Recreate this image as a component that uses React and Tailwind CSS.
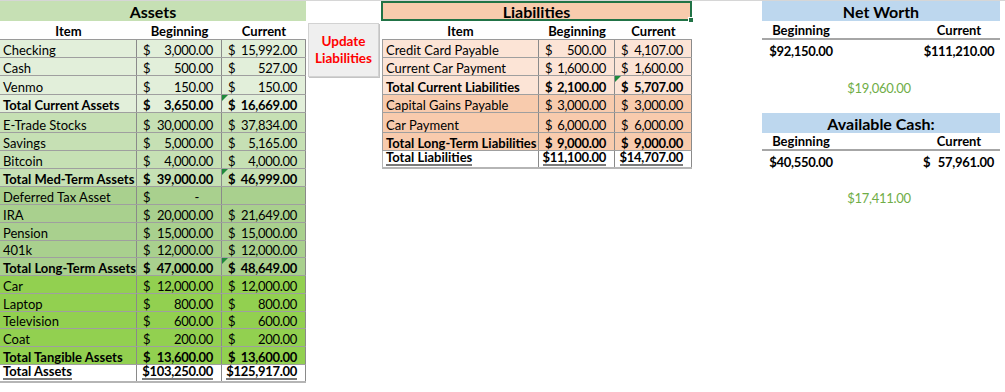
import React from 'react';

// row heights shared by every block so the sheet lines up
const H = ['h-[18px]', 'h-[18px]', 'h-[19px]', 'h-[18px]', 'h-[20px]', 'h-[18px]', 'h-[18px]', 'h-[18px]', 'h-[18px]', 'h-[18px]', 'h-[18px]', 'h-[17px]', 'h-[18px]', 'h-[18px]', 'h-[18px]', 'h-[17px]', 'h-[18px]', 'h-[18px]', 'h-[18px]'];

const assets = [
  { item: 'Checking', b: '3,000.00', c: '15,992.00', bg: 'bg-[#e2efda]' },
  { item: 'Cash', b: '500.00', c: '527.00', bg: 'bg-[#e2efda]' },
  { item: 'Venmo', b: '150.00', c: '150.00', bg: 'bg-[#e2efda]' },
  { item: 'Total Current Assets', b: '3,650.00', c: '16,669.00', bg: 'bg-[#e2efda]', bold: true, tri: true },
  { item: 'E-Trade Stocks', b: '30,000.00', c: '37,834.00', bg: 'bg-[#c6e0b4]' },
  { item: 'Savings', b: '5,000.00', c: '5,165.00', bg: 'bg-[#c6e0b4]' },
  { item: 'Bitcoin', b: '4,000.00', c: '4,000.00', bg: 'bg-[#c6e0b4]' },
  { item: 'Total Med-Term Assets', b: '39,000.00', c: '46,999.00', bg: 'bg-[#c6e0b4]', bold: true, tri: true },
  { item: 'Deferred Tax Asset', b: '-', c: null, bg: 'bg-[#a9d08e]' },
  { item: 'IRA', b: '20,000.00', c: '21,649.00', bg: 'bg-[#a9d08e]' },
  { item: 'Pension', b: '15,000.00', c: '15,000.00', bg: 'bg-[#a9d08e]' },
  { item: '401k', b: '12,000.00', c: '12,000.00', bg: 'bg-[#a9d08e]' },
  { item: 'Total Long-Term Assets', b: '47,000.00', c: '48,649.00', bg: 'bg-[#a9d08e]', bold: true, tri: true },
  { item: 'Car', b: '12,000.00', c: '12,000.00', bg: 'bg-[#92d050]' },
  { item: 'Laptop', b: '800.00', c: '800.00', bg: 'bg-[#92d050]' },
  { item: 'Television', b: '600.00', c: '600.00', bg: 'bg-[#92d050]' },
  { item: 'Coat', b: '200.00', c: '200.00', bg: 'bg-[#92d050]' },
  { item: 'Total Tangible Assets', b: '13,600.00', c: '13,600.00', bg: 'bg-[#92d050]', bold: true },
];

const liabilities = [
  { item: 'Credit Card Payable', b: '500.00', c: '4,107.00', bg: 'bg-[#fce4d6]' },
  { item: 'Current Car Payment', b: '1,600.00', c: '1,600.00', bg: 'bg-[#fce4d6]' },
  { item: 'Total Current Liabilities', b: '2,100.00', c: '5,707.00', bg: 'bg-[#fce4d6]', bold: true, tri: true },
  { item: 'Capital Gains Payable', b: '3,000.00', c: '3,000.00', bg: 'bg-[#f8cbad]' },
  { item: 'Car Payment', b: '6,000.00', c: '6,000.00', bg: 'bg-[#f8cbad]' },
  { item: 'Total Long-Term Liabilities', b: '9,000.00', c: '9,000.00', bg: 'bg-[#f8cbad]', bold: true },
];

const Tri = () => (
  <span className="absolute left-0 top-0 w-0 h-0 border-t-[6px] border-r-[6px] border-t-[#1f8a3c] border-r-transparent" />
);

const Money = ({ v, w, tri }) => (
  <div className={`relative flex items-end justify-between pl-[6px] pr-[8px] border-r border-[#8a8a8a] leading-[13px] tracking-[-0.3px] ${w}`}>
    {tri && <Tri />}
    {v !== null && <span>$</span>}
    {v === '-' ? <span className="pr-[14px]">-</span> : <span>{v}</span>}
  </div>
);

// bold figure with the sheet's grey underline
const Under = ({ children }) => (
  <span className="inline-block leading-[13px] border-b-2 border-[#7a7a7a]">{children}</span>
);

const Total = ({ v, w }) => (
  <div className={`flex items-end justify-end pr-[8px] pb-[1px] border-r border-[#8a8a8a] tracking-[-0.3px] ${w}`}>
    <Under>{v}</Under>
  </div>
);

const App = () => {
  return (
    <div className="w-[1005px] h-[392px] bg-white overflow-hidden border-t border-[#d6d6d6] flex items-start text-black text-[13px] leading-[17px] font-[family-name:Lato,sans-serif]">

      {/* ASSETS */}
      <div className="w-[306px] flex flex-col shrink-0">
        <div className="h-[20px] bg-[#c6e0b4] flex items-center justify-center text-[16px] font-bold">Assets</div>
        <div className="h-[19px] flex items-end font-bold border-b border-[#9a9a9a] leading-[15px]">
          <div className="w-[137px] text-center">Item</div>
          <div className="w-[85px] text-center">Beginning</div>
          <div className="w-[84px] text-center">Current</div>
        </div>
        {assets.map((r, i) => (
          <div key={r.item} className={`flex border-b border-[#9f9f9f] ${H[i]} ${r.bg} ${r.bold ? 'font-bold' : ''}`}>
            <div className="w-[137px] pl-[3px] flex items-end leading-[13px] border-r border-[#8a8a8a] whitespace-nowrap">{r.item}</div>
            <Money v={r.b} w="w-[85px]" />
            <Money v={r.c} w="w-[84px]" tri={r.tri} />
          </div>
        ))}
        <div className={`flex font-bold border-b-2 border-[#b5b5b5] ${H[18]}`}>
          <div className="w-[137px] pl-[3px] pb-[1px] flex items-end border-r border-[#8a8a8a]">
            <Under>Total Assets</Under>
          </div>
          <Total v="$103,250.00" w="w-[85px]" />
          <Total v="$125,917.00" w="w-[84px]" />
        </div>
      </div>

      {/* BUTTON */}
      <div className="w-[76px] shrink-0 pt-[22px] pl-[2px]">
        <div className="w-[71px] h-[54px] bg-[#efefef] border border-[#d2d2d2] shadow-[1px_1px_0_#c4c4c4] flex flex-col items-center justify-center text-[#ff0000] font-bold text-[13.5px] leading-[17px]">
          <span>Update</span>
          <span>Liabilities</span>
        </div>
      </div>

      {/* LIABILITIES */}
      <div className="w-[310px] flex flex-col shrink-0">
        <div className="relative h-[20px] -ml-[1px] bg-[#f8cbad] border-2 border-[#217346] flex items-center justify-center text-[16px] font-bold">
          Liabilities
          <span className="absolute -right-[4px] -bottom-[4px] w-[6px] h-[6px] bg-[#217346] border border-white" />
        </div>
        <div className="h-[19px] flex items-end font-bold border-b border-[#9a9a9a] leading-[15px]">
          <div className="w-[157px] text-center">Item</div>
          <div className="w-[76px] text-center">Beginning</div>
          <div className="w-[77px] text-center">Current</div>
        </div>
        {liabilities.map((r, i) => (
          <div key={r.item} className={`flex border-l border-b border-[#9f9f9f] ${H[i]} ${r.bg} ${r.bold ? 'font-bold' : ''}`}>
            <div className="w-[156px] pl-[3px] flex items-end leading-[13px] border-r border-[#8a8a8a] whitespace-nowrap">{r.item}</div>
            <Money v={r.b} w="w-[76px]" />
            <Money v={r.c} w="w-[77px]" tri={r.tri} />
          </div>
        ))}
        <div className={`flex font-bold border-l border-b-2 border-[#b5b5b5] ${H[6]}`}>
          <div className="w-[156px] pl-[3px] pb-[1px] flex items-end border-r border-[#8a8a8a]">
            <Under>Total Liabilities</Under>
          </div>
          <Total v="$11,100.00" w="w-[76px]" />
          <Total v="$14,707.00" w="w-[77px]" />
        </div>
      </div>

      <div className="w-[70px] shrink-0" />

      {/* NET WORTH */}
      <div className="w-[238px] flex flex-col shrink-0">
        <div className="h-[20px] bg-[#bdd7ee] flex items-center justify-center text-[16px] font-bold">Net Worth</div>
        <div className="h-[19px] flex items-end font-bold border-b-2 border-[#a6a6a6] leading-[15px]">
          <div className="w-[78px] text-center">Beginning</div>
          <div className="w-[78px]" />
          <div className="w-[82px] text-center">Current</div>
        </div>
        <div className={`flex items-end font-bold leading-[13px] tracking-[-0.3px] ${H[0]}`}>
          <div className="w-[78px] text-center">$92,150.00</div>
          <div className="w-[78px]" />
          <div className="w-[82px] text-center">$111,210.00</div>
        </div>
        <div className={H[1]} />
        <div className={`flex items-end leading-[13px] tracking-[-0.3px] ${H[2]}`}>
          <div className="w-[78px]" />
          <div className="w-[78px] text-center text-[#70ad47]">$19,060.00</div>
        </div>
        <div className={H[3]} />
        <div className={`bg-[#bdd7ee] flex items-center justify-center text-[16px] font-bold ${H[4]}`}>Available Cash:</div>
        <div className={`flex items-end font-bold border-b-2 border-[#a6a6a6] leading-[15px] ${H[5]}`}>
          <div className="w-[78px] text-center">Beginning</div>
          <div className="w-[78px]" />
          <div className="w-[82px] text-center">Current</div>
        </div>
        <div className={`flex items-end font-bold leading-[13px] tracking-[-0.3px] ${H[6]}`}>
          <div className="w-[78px] text-center">$40,550.00</div>
          <div className="w-[78px]" />
          <div className="w-[82px] flex justify-between pl-[5px] pr-[6px]">
            <span>$</span>
            <span>57,961.00</span>
          </div>
        </div>
        <div className={H[7]} />
        <div className={`flex items-end leading-[13px] tracking-[-0.3px] ${H[8]}`}>
          <div className="w-[78px]" />
          <div className="w-[78px] text-center text-[#70ad47]">$17,411.00</div>
        </div>
      </div>
    </div>
  );
};

export default App;
